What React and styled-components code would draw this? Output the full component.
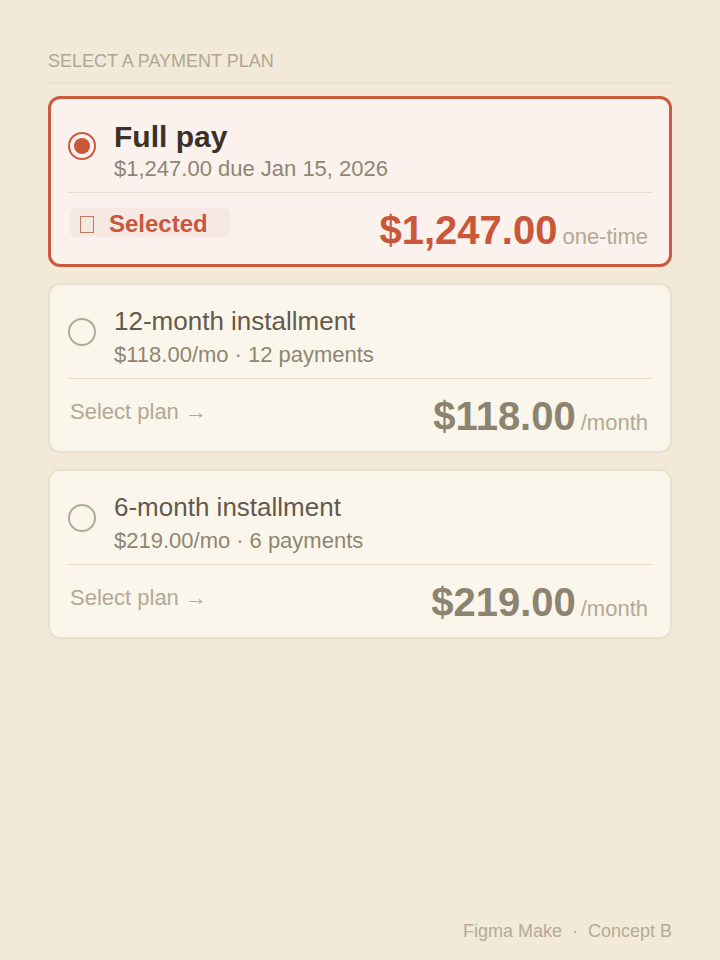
import React, { useState } from "react";
import styled, { createGlobalStyle } from "styled-components";

const GlobalStyle = createGlobalStyle`
  html, body {
    margin: 0;
    padding: 0;
    background: #f2e9d8;
  }
  body {
    font-family: "Liberation Sans", Arial, sans-serif;
  }
  * { box-sizing: border-box; }
`;

const plans = [
  {
    id: "full",
    title: "Full pay",
    detail: ["$1,247.00 due Jan 15, 2026"],
    price: "$1,247.00",
    unit: "one-time",
  },
  {
    id: "12mo",
    title: "12-month installment",
    detail: ["$118.00/mo", "12 payments"],
    price: "$118.00",
    unit: "/month",
  },
  {
    id: "6mo",
    title: "6-month installment",
    detail: ["$219.00/mo", "6 payments"],
    price: "$219.00",
    unit: "/month",
  },
];

const Page = styled.div`
  min-height: 100vh;
  display: flex;
  flex-direction: column;
  padding: 51px 48px 17px;
`;

const Heading = styled.h2`
  margin: 0 0 13px;
  padding-bottom: 10px;
  border-bottom: 1px solid #e4dbca;
  font-size: 18px;
  line-height: 21px;
  font-weight: 400;
  color: #b1a792;
  text-transform: uppercase;
`;

const List = styled.div`
  display: flex;
  flex-direction: column;
  gap: 16px;
`;

const Card = styled.div`
  border-radius: 12px;
  border: ${(p) => (p.$active ? "3px solid #cc5a3c" : "2px solid #eae0ce")};
  background: ${(p) => (p.$active ? "#fbf1ed" : "#faf6eb")};
  padding: 21px ${(p) => (p.$active ? "17px" : "18px")} 0;
  cursor: pointer;
`;

const Head = styled.div`
  display: flex;
  align-items: flex-start;
  gap: 18px;
  height: 72px;
`;

const Radio = styled.span`
  flex: none;
  width: 28px;
  height: 28px;
  margin-top: 12px;
  border-radius: 50%;
  border: ${(p) => (p.$active ? "2.5px solid #cc5a3c" : "2px solid #b3aa95")};
  display: flex;
  align-items: center;
  justify-content: center;

  &::after {
    content: "";
    display: ${(p) => (p.$active ? "block" : "none")};
    width: 16px;
    height: 16px;
    border-radius: 50%;
    background: #c9573a;
  }
`;

const Info = styled.div`
  display: flex;
  flex-direction: column;
`;

const Title = styled.div`
  font-size: ${(p) => (p.$active ? "30px" : "26px")};
  line-height: ${(p) => (p.$active ? "34px" : "30px")};
  font-weight: ${(p) => (p.$active ? 700 : 400)};
  color: ${(p) => (p.$active ? "#3a3129" : "#645a4b")};
`;

const Detail = styled.div`
  margin-top: ${(p) => (p.$active ? "2px" : "6px")};
  font-size: 22px;
  line-height: 26px;
  color: #8f8672;
  display: flex;
  gap: 6px;
`;

const Divider = styled.div`
  height: 1px;
  background: ${(p) => (p.$active ? "#ecdbcf" : "#e8ddcb")};
`;

const Foot = styled.div`
  height: ${(p) => (p.$active ? "71px" : "72px")};
  padding: 15px 4px 0 2px;
  display: flex;
  align-items: flex-start;
  justify-content: space-between;
`;

const Badge = styled.span`
  width: 160px;
  height: 29px;
  padding: 3px 0 0 10px;
  border-radius: 6px;
  background: #f6e9e3;
  display: flex;
  align-items: center;
  gap: 15px;
  font-size: 24px;
  font-weight: 700;
  color: #c9573a;
`;

const Tofu = styled.span`
  width: 14px;
  height: 17px;
  border: 1.5px solid #c4775f;
`;

const SelectLink = styled.span`
  margin-top: 5px;
  font-size: 22px;
  line-height: 26px;
  color: #b3a994;
`;

const Price = styled.div`
  margin-top: 2px;
  display: flex;
  align-items: baseline;
  gap: 5px;
`;

const Amount = styled.span`
  font-size: 40px;
  line-height: 40px;
  font-weight: 700;
  color: ${(p) => (p.$active ? "#c9573a" : "#8c8370")};
`;

const Unit = styled.span`
  font-size: 22px;
  color: #b3a994;
`;

const Footer = styled.div`
  margin-top: auto;
  display: flex;
  justify-content: flex-end;
  gap: 10px;
  font-size: 18px;
  line-height: 21.6px;
  color: #b5ab97;
`;

export default function App() {
  const [selected, setSelected] = useState("full");

  return (
    <Page>
      <GlobalStyle />
      <Heading>Select a payment plan</Heading>
      <List>
        {plans.map((plan) => {
          const active = plan.id === selected;
          return (
            <Card key={plan.id} $active={active} onClick={() => setSelected(plan.id)}>
              <Head>
                <Radio $active={active} />
                <Info>
                  <Title $active={active}>{plan.title}</Title>
                  <Detail $active={active}>
                    {plan.detail.map((d, i) => (
                      <React.Fragment key={d}>
                        {i > 0 && <span>·</span>}
                        <span>{d}</span>
                      </React.Fragment>
                    ))}
                  </Detail>
                </Info>
              </Head>
              <Divider $active={active} />
              <Foot $active={active}>
                {active ? (
                  <Badge>
                    <Tofu />
                    Selected
                  </Badge>
                ) : (
                  <SelectLink>Select plan →</SelectLink>
                )}
                <Price>
                  <Amount $active={active}>{plan.price}</Amount>
                  <Unit>{plan.unit}</Unit>
                </Price>
              </Foot>
            </Card>
          );
        })}
      </List>
      <Footer>
        <span>Figma Make</span>
        <span>·</span>
        <span>Concept B</span>
      </Footer>
    </Page>
  );
}
